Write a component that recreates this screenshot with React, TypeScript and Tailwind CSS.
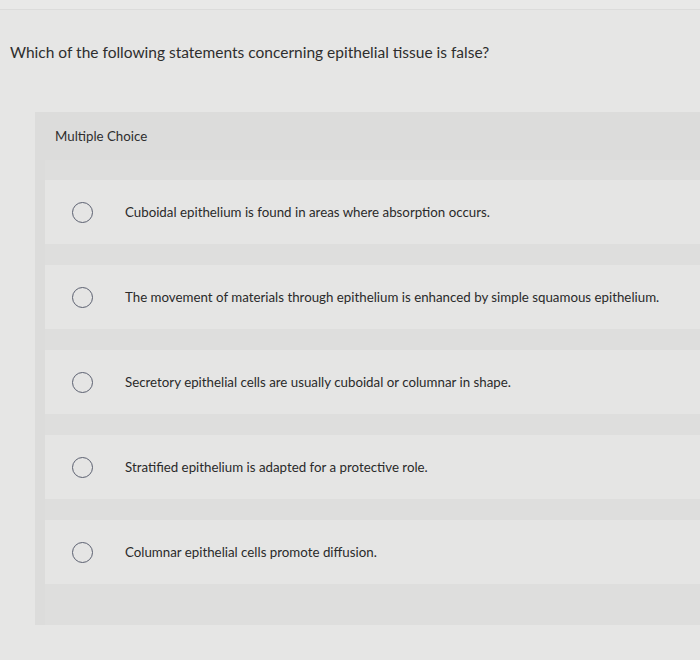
import React from 'react';

const OPTIONS = [
  'Cuboidal epithelium is found in areas where absorption occurs.',
  'The movement of materials through epithelium is enhanced by simple squamous epithelium.',
  'Secretory epithelial cells are usually cuboidal or columnar in shape.',
  'Stratified epithelium is adapted for a protective role.',
  'Columnar epithelial cells promote diffusion.',
];

export default function App() {
  return (
    <div
      className="w-[700px] h-[660px] overflow-hidden bg-[#e6e6e5] text-[#2e2e2e]"
      style={{ fontFamily: 'Lato, "Open Sans", sans-serif' }}
    >
      <div className="h-[10px] bg-[#e9e9e8] border-b border-[#dcdcdb]" />
      <h1 className="pl-[10px] pt-[32px] text-[15.5px] leading-5 font-normal">
        Which of the following statements concerning epithelial tissue is false?
      </h1>

      <div className="ml-[35px] mt-[50px] h-[513px] bg-[#dcdcdb]">
        <div className="h-[48px] pl-[20px] pt-[16px] text-[13.3px] leading-4">Multiple Choice</div>
        <div className="ml-[10px] pt-[20px] flex flex-col gap-[21px] bg-[#dededd] h-[465px]">
          {OPTIONS.map((opt, i) => (
            <div key={i} className="h-[64px] flex items-center bg-[#e5e5e4]">
              <span className="ml-[27px] w-[21px] h-[21px] rounded-full border border-[#5b6070] shrink-0" />
              <span className="ml-[32px] text-[13.3px] leading-4 text-[#2a2a2a]">{opt}</span>
            </div>
          ))}
        </div>
      </div>
    </div>
  );
}
